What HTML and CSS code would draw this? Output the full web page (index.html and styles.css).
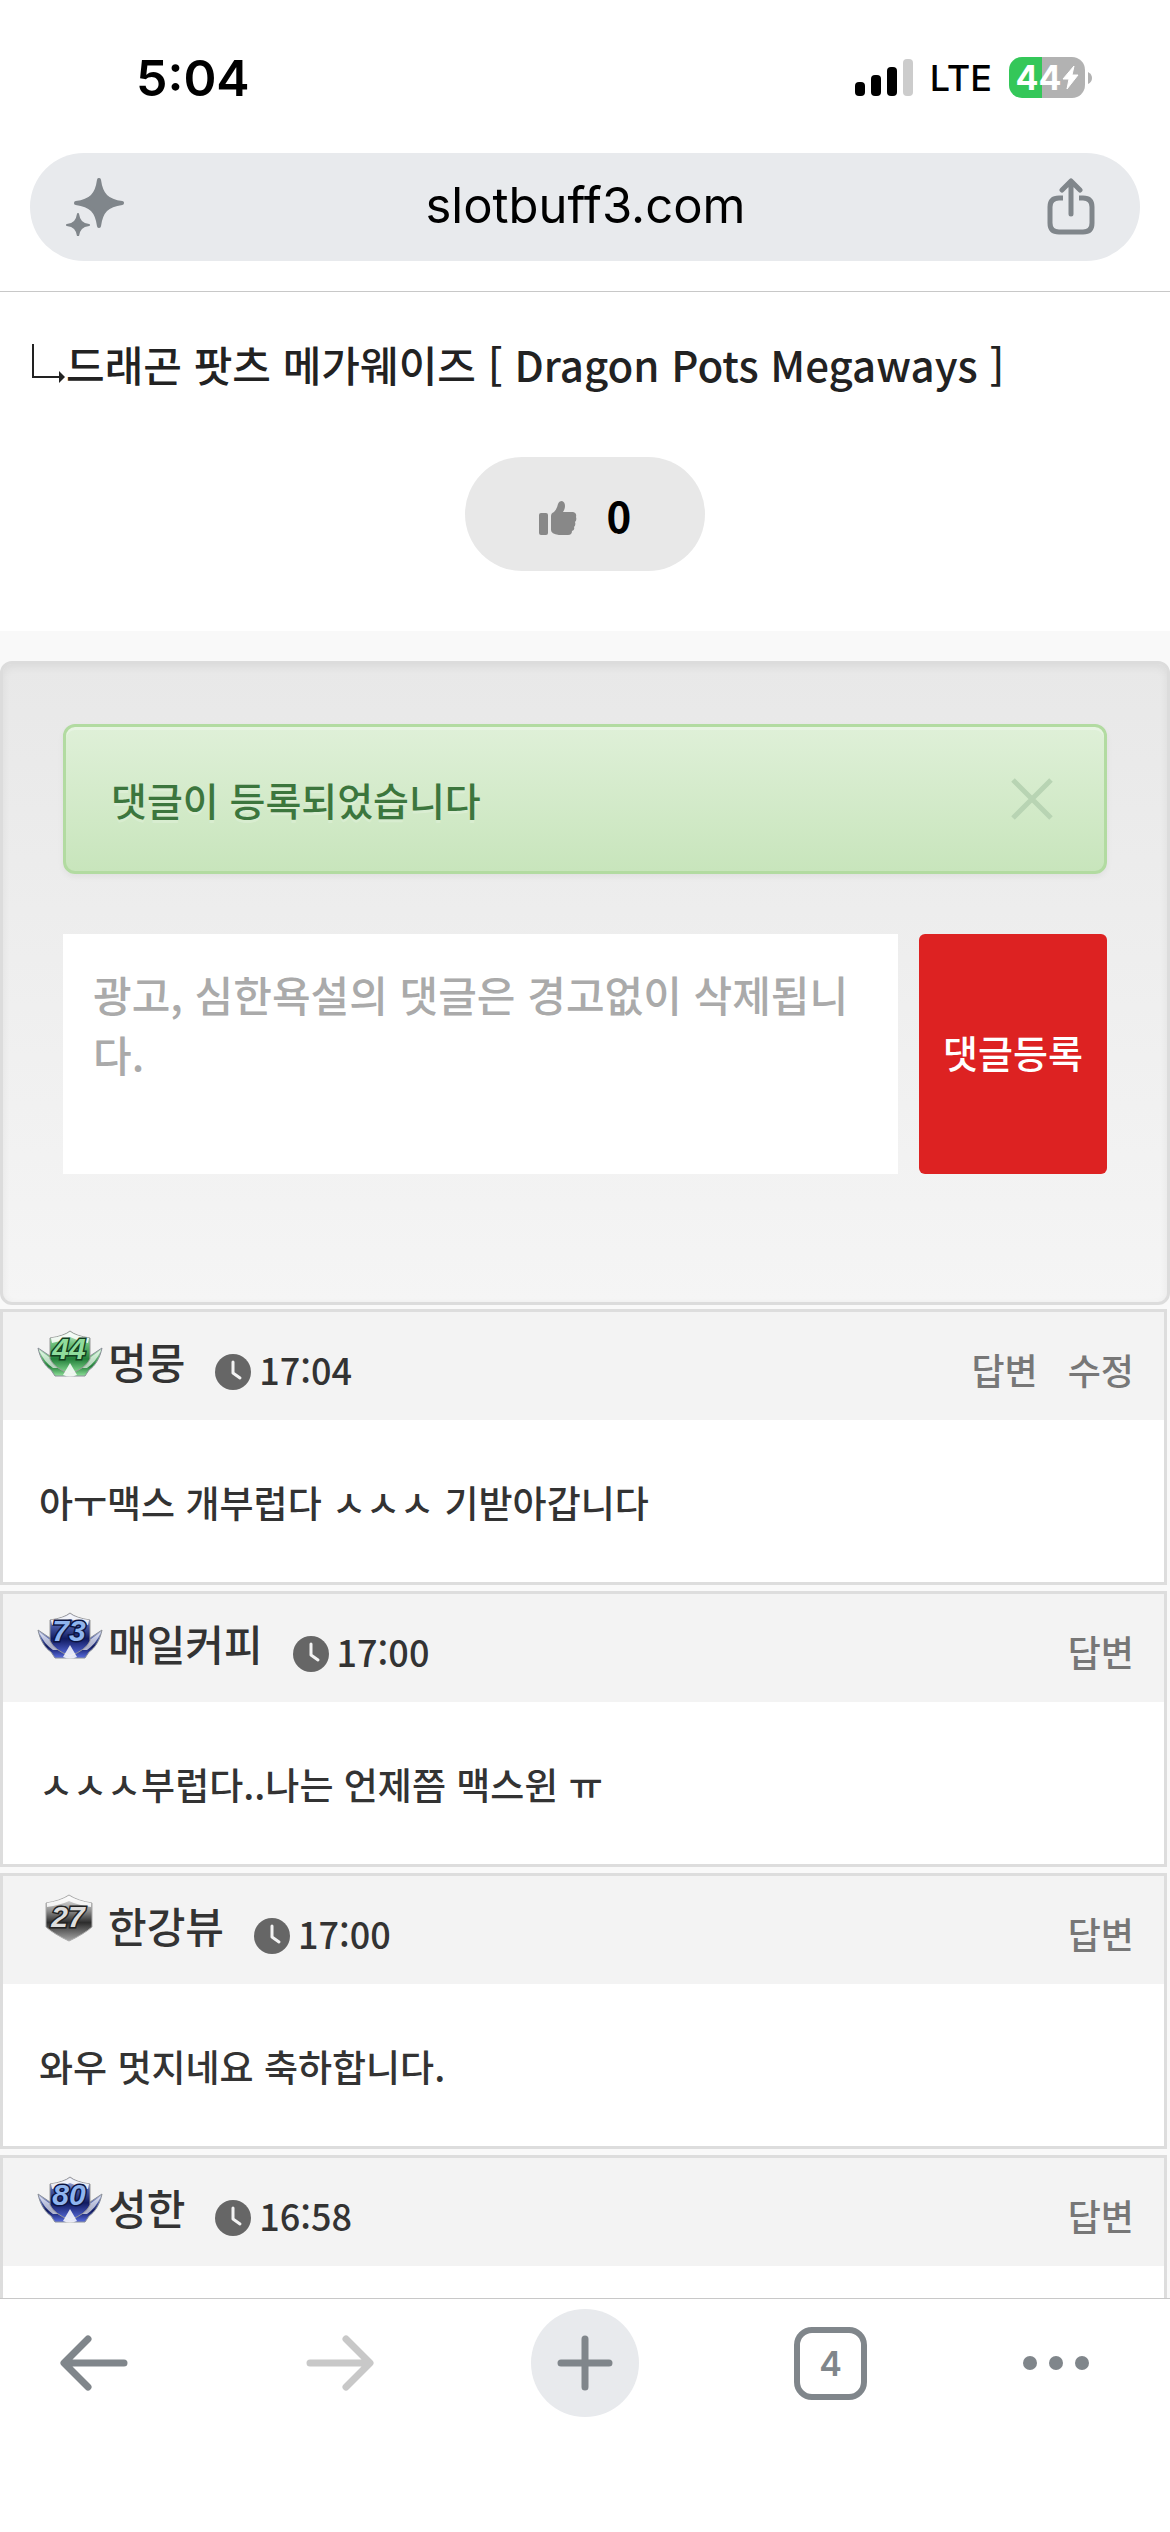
FILE: index.html
```html
<!DOCTYPE html>
<html lang="ko">
<head>
<meta charset="UTF-8">
<meta name="viewport" content="width=device-width, initial-scale=1.0">
<title>slotbuff3.com</title>
<link rel="stylesheet" href="styles.css">
</head>
<body>
    <!-- shared shapes -->
    <svg class="defs" aria-hidden="true">
        <defs>
            <linearGradient id="green" x1="0" y1="0" x2="0" y2="1">
                <stop offset="0" stop-color="#d8f2de"/>
                <stop offset="0.3" stop-color="#6cc07c"/>
                <stop offset="0.65" stop-color="#23803a"/>
                <stop offset="1" stop-color="#8fe09a"/>
            </linearGradient>
            <linearGradient id="blue" x1="0" y1="0" x2="0" y2="1">
                <stop offset="0" stop-color="#d4d8ee"/>
                <stop offset="0.3" stop-color="#4a5ca8"/>
                <stop offset="0.6" stop-color="#101a60"/>
                <stop offset="1" stop-color="#5a6ee0"/>
            </linearGradient>
            <linearGradient id="gray" x1="0" y1="0" x2="0" y2="1">
                <stop offset="0" stop-color="#f6f6f6"/>
                <stop offset="0.35" stop-color="#8a8a8a"/>
                <stop offset="0.6" stop-color="#2c2c2c"/>
                <stop offset="1" stop-color="#a8a8a8"/>
            </linearGradient>
            <symbol id="wings" viewBox="0 0 66 48">
                <path d="M1 18C3 28 8 36 14 40L18 46H48L52 40C58 36 63 28 65 18L50 28L42 38H24L16 28Z" stroke="#8a8f98" stroke-width="1"/>
                <path d="M2 20L15 29L24 38L16 38Q7 32 2 20ZM64 20L51 29L42 38L50 38Q59 32 64 20Z" fill="#fff" opacity=".65"/>
                <path d="M13 8Q27 6 33 1Q39 6 53 8V29Q49 38 33 44Q17 38 13 29Z" stroke="#999" stroke-width="1"/>
                <path d="M14 8Q27 6 33 2Q39 6 52 8L51 13Q41 11 33 7Q25 11 15 13Z" fill="#fff" opacity=".85"/>
                <path d="M33 33L40 45Q33 48 26 45Z" fill="#fff" opacity=".85"/>
            </symbol>
            <symbol id="clock" viewBox="0 0 36 36">
                <circle cx="18" cy="18" r="18" fill="#666"/>
                <path d="M18 8V19L25 24" fill="none" stroke="#f3f3f3" stroke-width="3" stroke-linecap="round" stroke-linejoin="round"/>
            </symbol>
        </defs>
    </svg>

    <div class="statusbar">
        <span class="time">5:04</span>
        <div class="status-icons">
            <svg width="58" height="38" viewBox="0 0 58 38" aria-hidden="true">
                <rect x="0" y="23" width="10" height="14" rx="4"/>
                <rect x="16" y="16" width="10" height="21" rx="4"/>
                <rect x="32" y="8" width="10" height="29" rx="4"/>
                <rect x="48" y="0" width="10" height="37" rx="4" fill="#ccc"/>
            </svg>
            <span class="lte">LTE</span>
            <div class="battery">
                <span>44</span>
                <svg width="17" height="25" viewBox="0 0 17 25" aria-hidden="true">
                    <path d="M12 1L1 14H7L5 24L16 10H10Z" fill="#fff" stroke="#fff" stroke-linejoin="round"/>
                </svg>
            </div>
            <svg class="nub" width="4" height="12" viewBox="0 0 4 12" aria-hidden="true">
                <path d="M0 0Q4 2 4 6T0 12Z" fill="#b2b2b2"/>
            </svg>
        </div>
    </div>

    <header class="urlbar">
        <div class="omnibox">
            <button type="button" aria-label="AI">
                <svg width="58" height="58" viewBox="0 0 58 58" fill="#80868b" stroke="#80868b" stroke-linejoin="round" aria-hidden="true">
                    <path d="M33 2C35 17 41 23 56 25C41 27 35 33 33 48C31 33 25 27 10 25C25 23 31 17 33 2Z" stroke-width="4"/>
                    <path d="M12 36C13 43 16 46 23 47C16 48 13 51 12 58C11 51 8 48 1 47C8 46 11 43 12 36Z" stroke-width="2"/>
                </svg>
            </button>
            <a href="#">slotbuff3.com</a>
            <button type="button" aria-label="공유">
                <svg width="48" height="58" viewBox="0 0 48 58" fill="none" stroke="#80868b" stroke-width="5" stroke-linecap="round" stroke-linejoin="round" aria-hidden="true">
                    <path d="M24 36V4M15 12L24 3L33 12"/>
                    <path d="M16 20H12Q3 20 3 29V45Q3 54 12 54H36Q45 54 45 45V29Q45 20 36 20H32" stroke-linecap="butt"/>
                </svg>
            </button>
        </div>
    </header>

    <main>
        <section class="post">
            <h1>
                <svg width="36" height="40" viewBox="0 0 36 40" aria-hidden="true">
                    <path d="M3 0V33H30" fill="none" stroke="#222" stroke-width="2"/>
                    <path d="M29 27L35 33L29 39Z" fill="#222"/>
                </svg>드래곤 팟츠 메가웨이즈 [ Dragon Pots Megaways ]
            </h1>
            <button type="button" class="like">
                <svg width="38" height="34" viewBox="0 0 38 34" fill="#888" aria-hidden="true">
                    <rect x="0" y="12" width="9" height="22" rx="2"/>
                    <path d="M12 15Q12 12 15 11Q18 8 19 3Q20 0 23 0Q26 1 26 5Q26 8 24 11H34Q38 12 37 16Q38 19 36 21Q37 24 35 26Q36 29 33 30Q33 34 29 34H20Q12 33 12 29Z"/>
                </svg>
                <span>0</span>
            </button>
        </section>

        <section class="write">
            <div class="alert" role="alert">
                <span>댓글이 등록되었습니다</span>
                <button type="button" aria-label="닫기">
                    <svg width="42" height="42" viewBox="0 0 42 42" aria-hidden="true">
                        <path d="M2 2L40 40M40 2L2 40" stroke="#b8d4b3" stroke-width="5"/>
                    </svg>
                </button>
            </div>
            <form class="comment-form">
                <textarea aria-label="댓글" placeholder="광고, 심한욕설의 댓글은 경고없이 삭제됩니다."></textarea>
                <button type="button">댓글등록</button>
            </form>
        </section>

        <section class="comments">
            <article class="comment">
                <header>
                    <svg class="badge" width="66" height="48" viewBox="0 0 66 48" role="img" aria-label="레벨 44">
                        <use href="#wings" width="66" height="48" fill="url(#green)"/>
                        <text x="32" y="29" class="lv lv-green">44</text>
                    </svg>
                    <strong>멍뭉</strong>
                    <svg class="clock" width="36" height="36" aria-hidden="true"><use href="#clock"/></svg>
                    <time>17:04</time>
                    <nav><a href="#">답변</a><a href="#">수정</a></nav>
                </header>
                <p>아ㅜ맥스 개부럽다 ㅅㅅㅅ 기받아갑니다</p>
            </article>
            <article class="comment">
                <header>
                    <svg class="badge" width="66" height="48" viewBox="0 0 66 48" role="img" aria-label="레벨 73">
                        <use href="#wings" width="66" height="48" fill="url(#blue)"/>
                        <text x="32" y="29" class="lv lv-blue">73</text>
                    </svg>
                    <strong>매일커피</strong>
                    <svg class="clock" width="36" height="36" aria-hidden="true"><use href="#clock"/></svg>
                    <time>17:00</time>
                    <nav><a href="#">답변</a></nav>
                </header>
                <p>ㅅㅅㅅ부럽다..나는 언제쯤 맥스윈 ㅠ</p>
            </article>
            <article class="comment">
                <header>
                    <svg class="badge" width="66" height="48" viewBox="0 0 66 48" role="img" aria-label="레벨 27">
                        <path d="M9 9Q23 7 32 1Q41 7 55 9V33Q47 40 32 47Q17 40 9 33Z" fill="url(#gray)" stroke="#aaa"/>
                        <path d="M10 9Q23 7 32 2Q41 7 54 9V13Q41 11 32 7Q23 11 10 13Z" fill="#fff" opacity=".85"/>
                        <text x="31" y="33" class="lv lv-gray">27</text>
                    </svg>
                    <strong>한강뷰</strong>
                    <svg class="clock" width="36" height="36" aria-hidden="true"><use href="#clock"/></svg>
                    <time>17:00</time>
                    <nav><a href="#">답변</a></nav>
                </header>
                <p>와우 멋지네요 축하합니다.</p>
            </article>
            <article class="comment">
                <header>
                    <svg class="badge" width="66" height="48" viewBox="0 0 66 48" role="img" aria-label="레벨 80">
                        <use href="#wings" width="66" height="48" fill="url(#blue)"/>
                        <text x="32" y="29" class="lv lv-blue">80</text>
                    </svg>
                    <strong>성한</strong>
                    <svg class="clock" width="36" height="36" aria-hidden="true"><use href="#clock"/></svg>
                    <time>16:58</time>
                    <nav><a href="#">답변</a></nav>
                </header>
                <p></p>
            </article>
        </section>
    </main>

    <footer class="toolbar">
        <button type="button" aria-label="뒤로">
            <svg width="68" height="56" viewBox="0 0 68 56" fill="none" stroke="#80868b" stroke-width="7" stroke-linecap="round" stroke-linejoin="round" aria-hidden="true"><path d="M64 28H5M28 4L4 28L28 52"/></svg>
        </button>
        <button type="button" aria-label="앞으로" disabled>
            <svg width="68" height="56" viewBox="0 0 68 56" fill="none" stroke="#c8c8c8" stroke-width="7" stroke-linecap="round" stroke-linejoin="round" aria-hidden="true"><path d="M4 28H63M40 4L64 28L40 52"/></svg>
        </button>
        <button type="button" class="new-tab" aria-label="새 탭">
            <svg width="56" height="56" viewBox="0 0 56 56" fill="none" stroke="#80868b" stroke-width="7" stroke-linecap="round" aria-hidden="true"><path d="M28 4V52M4 28H52"/></svg>
        </button>
        <button type="button"><span class="tabs">4</span></button>
        <button type="button" class="menu" aria-label="메뉴">
            <svg width="68" height="16" viewBox="0 0 68 16" fill="#80868b" aria-hidden="true"><circle cx="8" cy="8" r="7"/><circle cx="34" cy="8" r="7"/><circle cx="60" cy="8" r="7"/></svg>
        </button>
    </footer>
</body>
</html>
```
FILE: styles.css
```css
* {
    box-sizing: border-box;
}
body {
    margin: 0;
    height: 100vh;
    display: flex;
    flex-direction: column;
    background-color: #fff;
    color: #333;
    font-family: "Noto Sans CJK KR", sans-serif;
    font-weight: 500;
}
button {
    border: none;
    background: none;
    padding: 0;
    font: inherit;
    cursor: pointer;
}
a {
    color: inherit;
    text-decoration: none;
}
svg {
    display: block;
    flex: none;
}
.defs {
    position: absolute;
    width: 0;
    height: 0;
}

/* status bar */
.statusbar {
    display: flex;
    justify-content: space-between;
    align-items: center;
    height: 153px;
    padding: 2px 78px 0 136px;
    color: #000;
    font-family: Inter, sans-serif;
}
.time {
    font-size: 50px;
    font-weight: 600;
}
.status-icons {
    display: flex;
    align-items: center;
}
.lte {
    margin: 0 17px;
    font-size: 36px;
}
.battery {
    display: flex;
    align-items: center;
    justify-content: center;
    width: 76px;
    height: 41px;
    border-radius: 13px;
    background: linear-gradient(to right, #34c759 44%, #b2b2b2 44%);
    color: #fff;
    font-size: 34px;
    font-weight: 700;
}
.nub {
    margin-left: 3px;
}

/* address bar */
.urlbar {
    padding: 0 30px 30px;
    border-bottom: 1px solid #c8c8c8;
}
.omnibox {
    display: flex;
    justify-content: space-between;
    align-items: center;
    height: 108px;
    padding: 0 45px 0 36px;
    border-radius: 54px;
    background-color: #e8eaed;
    color: #000;
    font-family: Inter, sans-serif;
    font-size: 49px;
    font-weight: 400;
}
.omnibox a {
    padding-bottom: 4px;
}

/* page */
main {
    flex: 1;
    min-height: 0;
    overflow: hidden;
    background-color: #f9f9f9;
}
.post {
    padding: 34px 30px 60px;
    background-color: #fff;
}
h1 {
    display: flex;
    align-items: center;
    margin: 0 0 55px;
    font-size: 42px;
    font-weight: 500;
    line-height: 76px;
    color: #222;
}
.like {
    display: flex;
    justify-content: center;
    align-items: center;
    gap: 30px;
    width: 240px;
    height: 114px;
    margin: 0 auto;
    border-radius: 57px;
    background-color: #e8e8e8;
    color: #000;
    font-size: 42px;
    font-weight: 700;
}
.like svg {
    margin-top: 8px;
}
.write {
    margin: 30px 0 4px;
    padding: 60px 60px 128px;
    border: 3px solid #dcdcdc;
    border-radius: 12px;
    background: linear-gradient(to bottom, #e8e8e8, #f5f5f5);
    box-shadow: inset 0 3px 9px rgba(0, 0, 0, 0.06);
}
.alert {
    display: flex;
    justify-content: space-between;
    align-items: center;
    height: 150px;
    margin-bottom: 60px;
    padding: 0 51px 0 45px;
    border: 3px solid #b2dba1;
    border-radius: 12px;
    background: linear-gradient(to bottom, #dff0d8, #c8e5bc);
    box-shadow: inset 0 3px 0 rgba(255, 255, 255, 0.25), 0 3px 6px rgba(0, 0, 0, 0.05);
    color: #3c763d;
    font-size: 39px;
    text-shadow: 0 3px 0 rgba(255, 255, 255, 0.2);
}
.comment-form {
    display: flex;
    gap: 21px;
}
.comment-form textarea {
    flex: 1;
    min-width: 0;
    height: 240px;
    padding: 30px;
    border: none;
    resize: none;
    background-color: #fff;
    font: inherit;
    font-size: 42px;
    line-height: 60px;
}
.comment-form textarea::placeholder {
    color: #aaa;
}
.comment-form button {
    width: 188px;
    padding-bottom: 6px;
    border-radius: 6px;
    background-color: #dd2222;
    color: #fff;
    font-size: 38px;
}

/* comments */
.comments {
    display: flex;
    flex-direction: column;
    gap: 6px;
    padding-right: 3px;
}
.comment {
    border: 3px solid #ddd;
    background-color: #fff;
}
.comment header {
    display: flex;
    align-items: center;
    height: 108px;
    padding: 0 30px 0 34px;
    background-color: #f3f3f3;
}
.badge {
    align-self: flex-start;
    margin-top: 18px;
}
.comment strong {
    margin: 0 30px 12px 5px;
    font-size: 42px;
    font-weight: 500;
}
.clock {
    margin: 12px 8px 0 0;
}
.comment time {
    margin-top: 6px;
    font-size: 36px;
}
.comment nav {
    display: flex;
    gap: 30px;
    margin: 6px 0 0 auto;
    color: #777;
    font-size: 36px;
}
.comment p {
    margin: 0;
    min-height: 162px;
    padding: 52px 36px 50px;
    font-size: 37px;
    line-height: 60px;
}
.lv {
    font-family: "Liberation Sans", sans-serif;
    font-size: 30px;
    font-style: italic;
    font-weight: 700;
    text-anchor: middle;
    paint-order: stroke;
    stroke-width: 3px;
}
.lv-green {
    fill: #8fdc9c;
    stroke: #12401e;
}
.lv-blue {
    fill: #8fb4ee;
    stroke: #0c1440;
}
.lv-gray {
    fill: #ddd;
    stroke: #222;
}

/* bottom toolbar */
.toolbar {
    display: flex;
    justify-content: space-between;
    align-items: flex-start;
    height: 234px;
    padding: 10px 40px 0;
    border-top: 1px solid #c8c8c8;
}
.toolbar button {
    display: flex;
    justify-content: center;
    align-items: center;
    width: 108px;
    height: 108px;
}
.toolbar .new-tab {
    border-radius: 50%;
    background-color: #e8eaed;
}
.toolbar .menu {
    justify-content: flex-start;
}
.tabs {
    width: 73px;
    height: 73px;
    border: 6px solid #80868b;
    border-radius: 18px;
    color: #80868b;
    font-family: Inter, sans-serif;
    font-size: 34px;
    font-weight: 600;
    line-height: 61px;
    text-align: center;
}
```
